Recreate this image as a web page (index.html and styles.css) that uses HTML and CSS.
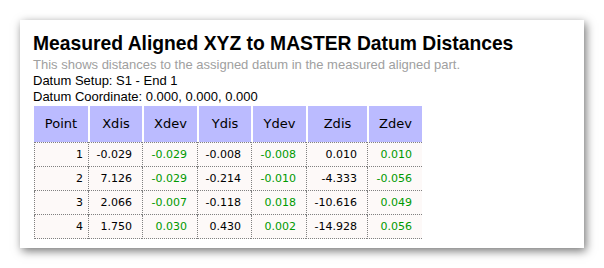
FILE: index.html
```html
<!DOCTYPE html>
<html>
<head>
<meta charset="utf-8">
<link rel="stylesheet" href="styles.css">
</head>
<body>
<div class="page">
  <div class="card">
    <h1 class="title">Measured Aligned XYZ to MASTER Datum Distances</h1>
    <p class="subtitle">This shows distances to the assigned datum in the measured aligned part.</p>
    <p class="info">Datum Setup: S1 - End 1</p>
    <p class="info">Datum Coordinate: 0.000, 0.000, 0.000</p>
    <table class="grid">
      <thead>
        <tr>
          <th class="c-point">Point</th>
          <th class="c-xdis">Xdis</th>
          <th class="c-xdev">Xdev</th>
          <th class="c-ydis">Ydis</th>
          <th class="c-ydev">Ydev</th>
          <th class="c-zdis">Zdis</th>
          <th class="c-zdev">Zdev</th>
        </tr>
      </thead>
      <tbody>
        <tr class="first">
          <td class="pt">1</td><td>-0.029</td><td class="dev">-0.029</td><td>-0.008</td><td class="dev">-0.008</td><td>0.010</td><td class="dev">0.010</td>
        </tr>
        <tr>
          <td class="pt">2</td><td>7.126</td><td class="dev">-0.029</td><td>-0.214</td><td class="dev">-0.010</td><td>-4.333</td><td class="dev">-0.056</td>
        </tr>
        <tr>
          <td class="pt">3</td><td>2.066</td><td class="dev">-0.007</td><td>-0.118</td><td class="dev">0.018</td><td>-10.616</td><td class="dev">0.049</td>
        </tr>
        <tr>
          <td class="pt">4</td><td>1.750</td><td class="dev">0.030</td><td>0.430</td><td class="dev">0.002</td><td>-14.928</td><td class="dev">0.056</td>
        </tr>
      </tbody>
    </table>
  </div>
</div>
</body>
</html>
```

FILE: styles.css
```css
html, body {
  margin: 0;
  padding: 0;
  background: #ffffff;
}

.page {
  padding: 20px;
}

.card {
  width: 564px;
  height: 228px;
  box-sizing: border-box;
  padding: 13px 13px 10px 13px;
  background: #ffffff;
  box-shadow: 2px 3px 9px rgba(0, 0, 0, 0.55);
  font-family: "Liberation Sans", Arial, sans-serif;
  color: #000;
}

.title {
  margin: 0;
  font-size: 19.3px;
  line-height: 22px;
  font-weight: bold;
}

.subtitle {
  margin: 1.5px 0 0 0;
  font-size: 13px;
  line-height: 16px;
  color: #a0a0a0;
}

.info {
  margin: 0;
  font-size: 13px;
  line-height: 16px;
}

.grid {
  margin: 1px 0 0 1px;
  border-collapse: separate;
  border-spacing: 0;
  table-layout: fixed;
  width: 388px;
  font-family: "DejaVu Sans", Verdana, sans-serif;
}

.grid th {
  box-sizing: border-box;
  background: #bbbbff;
  font-size: 13px;
  font-weight: normal;
  line-height: 16px;
  padding: 10px 0;
  text-align: center;
  border-left: 2px solid #ffffff;
  color: #000;
}

.grid th.c-point { border-left: 0; width: 54px; }
.grid th.c-xdis { width: 54px; }
.grid th.c-xdev { width: 55px; }
.grid th.c-ydis { width: 54px; }
.grid th.c-ydev { width: 55px; }
.grid th.c-zdis { width: 61px; }
.grid th.c-zdev { width: 55px; }

.grid td {
  background: #fdf9f8;
  font-size: 11px;
  line-height: 15px;
  padding: 4px 10px 4px 0;
  text-align: right;
  border-left: 1px dotted #808080;
  border-bottom: 1px dotted #808080;
  color: #000;
  white-space: nowrap;
}

.grid tr.first td {
  border-top: 1px dotted #808080;
}

.grid td.pt {
  padding-right: 5px;
}

.grid td.dev {
  color: #009900;
}
```
